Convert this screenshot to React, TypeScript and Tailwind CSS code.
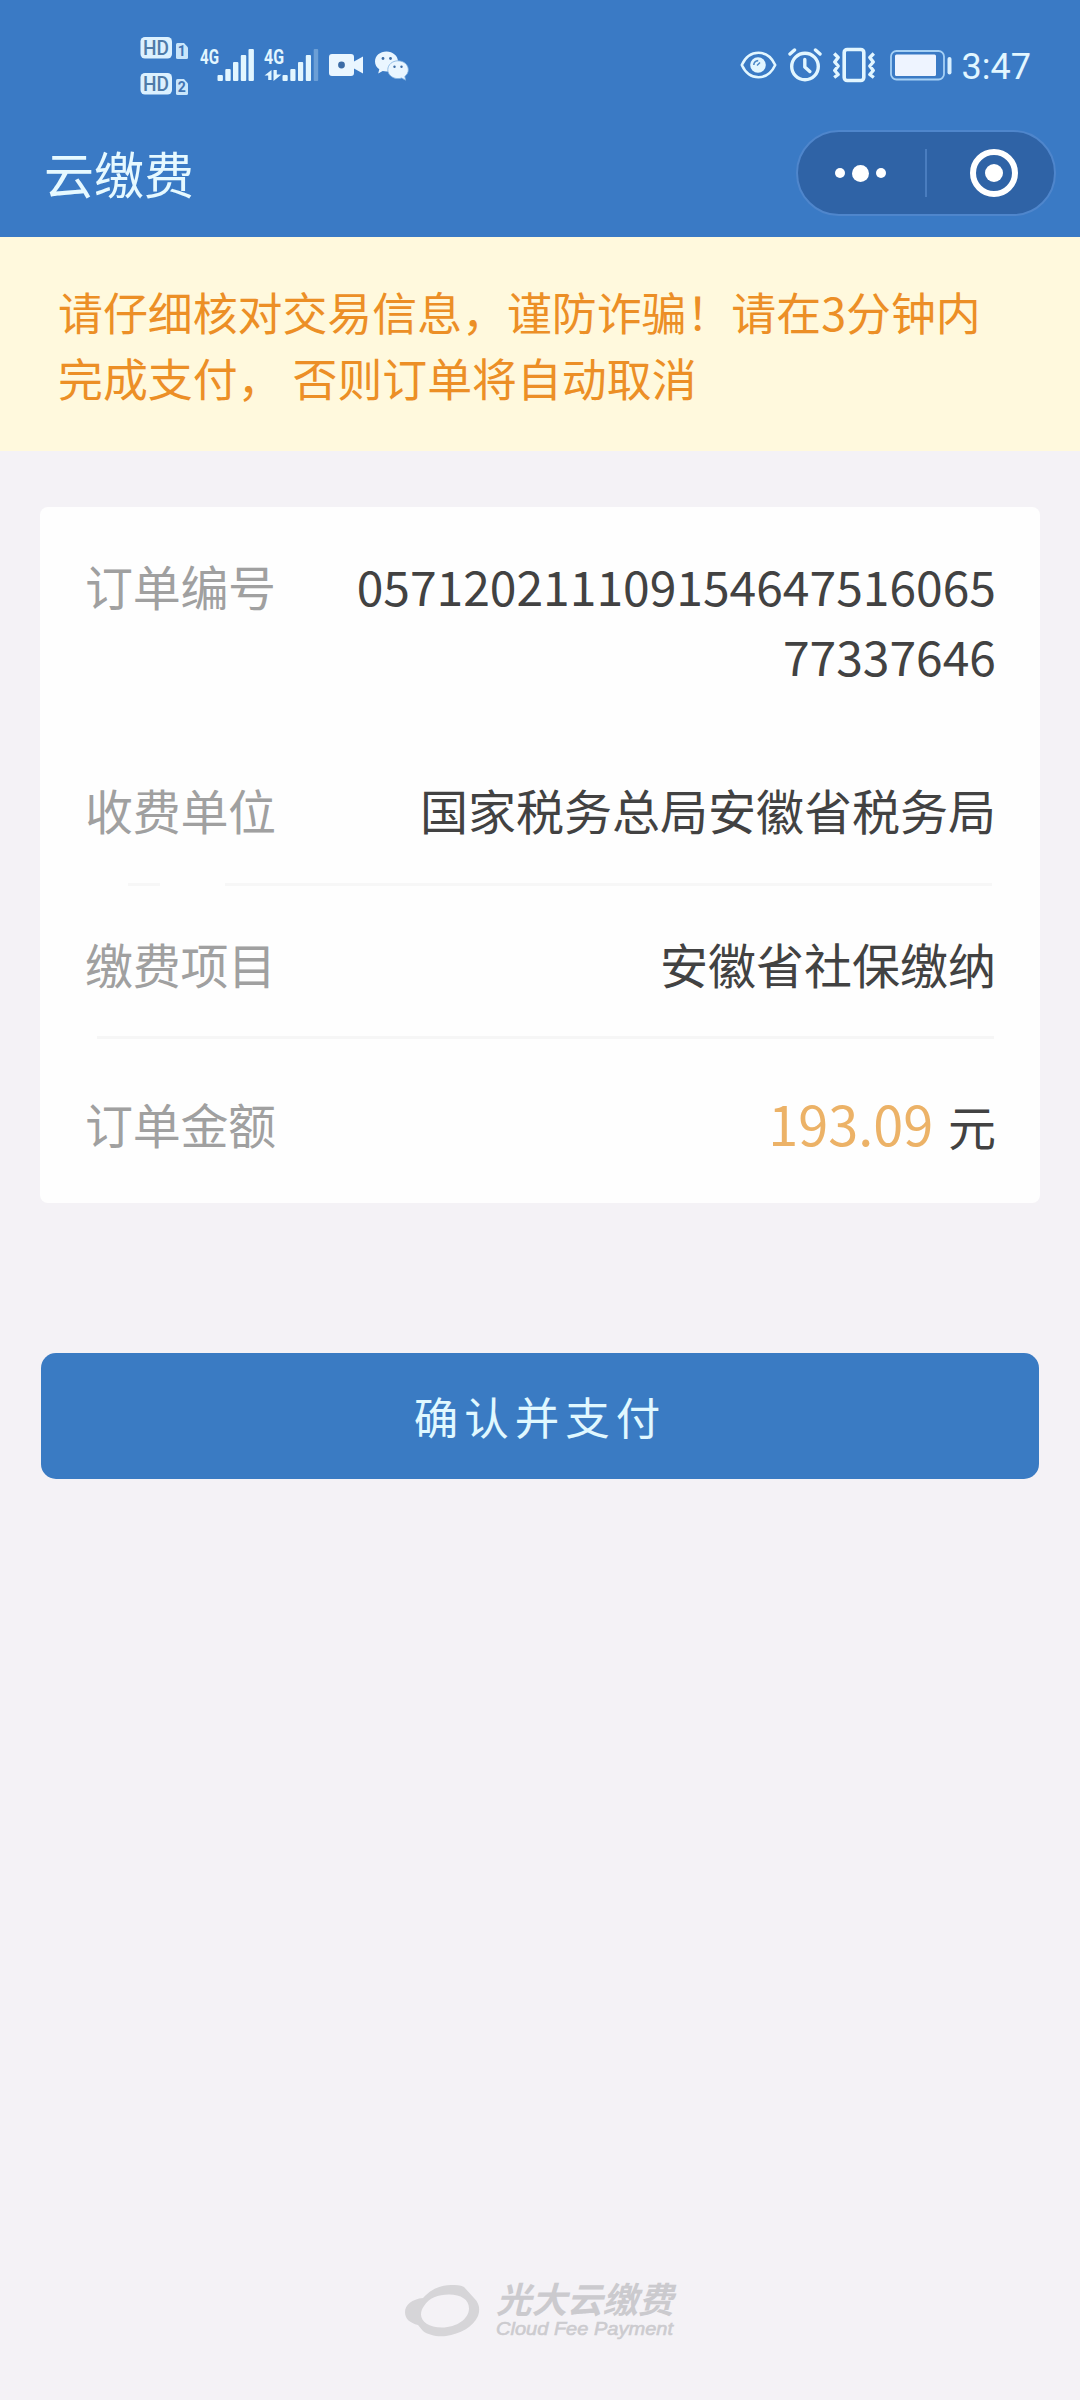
import type { ReactNode } from "react";

const ICE = "#e2f6ff";

function HdBadge({ sim }: { sim: string }) {
  return (
    <svg width="50" height="22" viewBox="0 0 50 22" className="overflow-visible">
      <rect x="0.500" y="0" width="31.500" height="21.500" rx="4.500" fill="#dcf1ff" />
      <text x="3" y="17.800" fontFamily="Roboto, sans-serif" fontSize="20" fontWeight="500" textLength="26" lengthAdjust="spacingAndGlyphs" fill="#4f7ba8">
        HD
      </text>
      <path d="M37.500 6H44l4 4.500v10a1.500 1.500 0 0 1-1.500 1.500H37.500a1.500 1.500 0 0 1-1.500-1.500v-13A1.500 1.500 0 0 1 37.500 6z" fill="#c9e6fb" />
      <text x="41.800" y="19" textAnchor="middle" fontFamily="Roboto, sans-serif" fontSize="14" fontWeight="700" fill="#3f74b4">
        {sim}
      </text>
    </svg>
  );
}

function SignalFull() {
  return (
    <svg width="56" height="34" viewBox="0 0 56 34" className="overflow-visible">
      <text x="0" y="15.500" fontFamily="Roboto, sans-serif" fontSize="21" fontWeight="700" textLength="19" lengthAdjust="spacingAndGlyphs" fill={ICE}>
        4G
      </text>
      <g fill={ICE}>
        <rect x="17.500" y="27" width="5.400" height="6" rx="1" />
        <rect x="25.300" y="21" width="5.400" height="12" rx="1" />
        <rect x="33" y="14" width="5.400" height="19" rx="1" />
        <rect x="40.800" y="7" width="5.400" height="26" rx="1" />
        <rect x="48.500" y="1" width="5.400" height="32" rx="1" />
      </g>
    </svg>
  );
}

function SignalData() {
  return (
    <svg width="56" height="34" viewBox="0 0 56 34" className="overflow-visible">
      <text x="0" y="15.500" fontFamily="Roboto, sans-serif" fontSize="21" fontWeight="700" textLength="20" lengthAdjust="spacingAndGlyphs" fill={ICE}>
        4G
      </text>
      <g fill={ICE}>
        <path d="M7.500 22v10H4.200V27.500H0.500z" />
        <path d="M9.500 22h3.300v4.500H17.500L9.500 33z" />
        <rect x="18.500" y="27" width="5.200" height="6" rx="1" />
        <rect x="26.300" y="21" width="5.200" height="12" rx="1" />
        <rect x="34" y="14" width="5.200" height="19" rx="1" />
        <rect x="41.800" y="7" width="5.200" height="26" rx="1" />
        <rect x="49.700" y="1" width="4.500" height="32" rx="1" opacity="0.3" />
      </g>
    </svg>
  );
}

function VideoIcon() {
  return (
    <svg width="36" height="24" viewBox="0 0 36 24">
      <path d="M3 1h19a3 3 0 0 1 3 3v4.500L34 3.500v17L25 15.500V20a3 3 0 0 1-3 3H3a3 3 0 0 1-3-3V4a3 3 0 0 1 3-3z" fill="#eaf6ff" />
      <circle cx="12.500" cy="12" r="3.400" fill="#3c6ca6" />
    </svg>
  );
}

function WechatIcon() {
  return (
    <svg width="34" height="30" viewBox="0 0 34 30">
      <path d="M11.500 0.500C5 0.500 0 4.800 0 10.500c0 3.200 1.600 6 4.300 7.800L3.200 22.500l4.500-2.400c1.200.3 2.500.5 3.800.5 6.300 0 11.500-4.500 11.500-10.100S17.800.5 11.500.5z" fill="#eaf6ff" />
      <circle cx="8" cy="7.500" r="1.400" fill="#3c6ca6" />
      <circle cx="15.500" cy="7.500" r="1.400" fill="#3c6ca6" />
      <path d="M23 9.800c5.800 0 10.300 3.900 10.300 8.900 0 2.700-1.300 5-3.500 6.700l.8 3.800-3.900-2.200c-1.200.4-2.400.6-3.700.6-5.700 0-10.200-4-10.200-8.900s4.500-8.900 10.200-8.900z" fill="#eaf6ff" stroke="#7fb0e0" strokeWidth="0.800" />
      <circle cx="19.500" cy="15.800" r="1.200" fill="#3c6ca6" />
      <circle cx="26.500" cy="15.800" r="1.200" fill="#3c6ca6" />
    </svg>
  );
}

function EyeIcon() {
  return (
    <svg width="37" height="30" viewBox="0 0 37 30" fill="none" stroke={ICE} strokeWidth="2.600">
      <path d="M1.800 15C5 8 11 2.800 18.500 2.800S32 8 35.200 15C32 22 26 27.200 18.500 27.200S5 22 1.800 15z" strokeLinejoin="round" />
      <circle cx="18" cy="15" r="7.800" fill={ICE} stroke="none" />
      <path d="M13.800 15a4.400 4.400 0 0 1 4.400-4.400" stroke="#4a86c6" strokeWidth="1.600" />
      <path d="M17 15.500l3-3" stroke="#4a86c6" strokeWidth="1.400" />
    </svg>
  );
}

function AlarmIcon() {
  return (
    <svg width="34" height="34" viewBox="0 0 34 34" fill="none" stroke={ICE} strokeWidth="3.400" strokeLinecap="round" strokeLinejoin="round">
      <circle cx="17" cy="18.500" r="13.300" />
      <path d="M16.800 11.500v7.500l5 4.500M2 6l4.500-4M32 6l-4.500-4" />
    </svg>
  );
}

function VibrateIcon() {
  return (
    <svg width="44" height="36" viewBox="0 0 44 36" fill="none" stroke={ICE} strokeLinejoin="round">
      <rect x="12.200" y="2.500" width="19.600" height="31" rx="3" strokeWidth="3.600" />
      <path d="M2.200 6.500l4 4-3.500 4.500 3.500 4-3.500 4.500 3.500 4-4 3M41.800 6.500l-4 4 3.500 4.500-3.500 4 3.500 4.500-3.500 4 4 3" strokeWidth="3.400" />
    </svg>
  );
}

function BatteryIcon() {
  return (
    <svg width="62" height="31" viewBox="0 0 62 31">
      <rect x="1" y="1" width="53" height="28.500" rx="5.500" fill="none" stroke="#a5d0f5" strokeWidth="1.800" />
      <rect x="5" y="4.500" width="41" height="21.500" rx="1.500" fill="#eef4ff" />
      <rect x="57.500" y="7" width="4" height="17.500" rx="2" fill="#d8efff" />
    </svg>
  );
}

function StatusBar() {
  return (
    <div className="flex h-[130px] items-start pl-[140px]">
      <div className="mt-[37px] flex flex-col gap-[14px]">
        <HdBadge sim="1" />
        <HdBadge sim="2" />
      </div>
      <div className="mt-[48px] ml-[10px]">
        <SignalFull />
      </div>
      <div className="mt-[48px] ml-[8px]">
        <SignalData />
      </div>
      <div className="mt-[53px] ml-[9px]">
        <VideoIcon />
      </div>
      <div className="mt-[51px] ml-[10px]">
        <WechatIcon />
      </div>
      <div className="mr-[49px] ml-auto flex h-[130px] items-center">
        <EyeIcon />
        <div className="ml-[11px]">
          <AlarmIcon />
        </div>
        <div className="ml-[10px]">
          <VibrateIcon />
        </div>
        <div className="ml-[14px]">
          <BatteryIcon />
        </div>
        <span className="mt-[3px] ml-[10px] font-[Roboto,sans-serif] text-[36px] leading-none text-[#e2f6ff]">3:47</span>
      </div>
    </div>
  );
}

function Capsule() {
  return (
    <div className="mr-[24px] flex h-[86px] w-[260px] items-center rounded-full border-2 border-[#4f86cc] bg-[#2f63a6]">
      <div className="flex w-[127px] items-center justify-center gap-[7px] pr-[2px]">
        <i className="size-[10px] rounded-full bg-white" />
        <i className="size-[17px] rounded-full bg-white" />
        <i className="size-[10px] rounded-full bg-white" />
      </div>
      <div className="h-[48px] w-[2px] bg-[#4a7dbf]" />
      <div className="flex flex-1 items-center justify-center pl-[6px]">
        <div className="flex size-[48px] items-center justify-center rounded-full border-[6px] border-white">
          <i className="size-[18px] rounded-full bg-white" />
        </div>
      </div>
    </div>
  );
}

function Row({ label, className, children }: { label: string; className: string; children: ReactNode }) {
  return (
    <div className={`flex items-start justify-between pr-[44px] pl-[45px] text-[48px] leading-[70px] ${className}`}>
      <span className="tracking-[-0.3px] text-[#a0a0a0]">{label}</span>
      <div className="text-right text-[#424242]">{children}</div>
    </div>
  );
}

function CloudLogo() {
  return (
    <svg width="76" height="54" viewBox="0 0 76 54">
      <path
        fillRule="evenodd"
        fill="#d6d5d8"
        d="M18 14C26 5 36 1 46 1c5 0 9 0 13 2l10 11c6 6 6 12 4 18-5 11-18 18-32 20-9 1-18-1-23-5l-5-6C5 39 0 35 0 28s7-13 18-14zM19 22c5-8 14-11.500 25-11.500 12 0 20 5 20 14 0 10-12 19-27 19-13 0-21-6-21-13 0-3 1-6 3-8.500z"
      />
    </svg>
  );
}

export default function App() {
  return (
    <div className="flex h-[2400px] w-[1080px] flex-col overflow-hidden bg-[#f4f2f6] font-['Noto_Sans_CJK_SC',sans-serif]">
      <header className="h-[237px] shrink-0 bg-[#3a7ac5]">
        <StatusBar />
        <div className="flex h-[86px] items-center justify-between pl-[44px]">
          <h1 className="pb-[3px] text-[50px] leading-none text-[#e6f9ff]">云缴费</h1>
          <Capsule />
        </div>
      </header>

      <div className="h-[214px] shrink-0 bg-[#fff9dd] pt-[42px] pl-[58px] text-[44.900px] leading-[65.500px] whitespace-nowrap text-[#ec8f26]">
        <p>请仔细核对交易信息，谨防诈骗！请在3分钟内</p>
        <p>完成支付， 否则订单将自动取消</p>
      </div>

      <section className="mx-[40px] mt-[56px] h-[696px] rounded-[8px] bg-[#fefefe]">
        <Row label="订单编号" className="h-[224px] pt-[43px]">
          <p>057120211109154647516065</p>
          <p>77337646</p>
        </Row>
        <Row label="收费单位" className="h-[152px] pt-[43px]">
          国家税务总局安徽省税务局
        </Row>
        <div className="mr-[48px] ml-[88px] flex h-[3px] gap-[65px]">
          <div className="w-[32px] bg-[#f7f7f7]" />
          <div className="flex-1 bg-[#f7f7f7]" />
        </div>
        <Row label="缴费项目" className="h-[150px] pt-[42px]">
          安徽省社保缴纳
        </Row>
        <div className="mr-[46px] ml-[57px] h-[3px] bg-[#f6f6f6]" />
        <Row label="订单金额" className="pt-[49px]">
          <span className="mr-[4px] text-[54px] text-[#ecb267]">193.09</span> 元
        </Row>
      </section>

      <button className="mx-[41px] mt-[150px] h-[126px] rounded-[15px] bg-[#3a7bc3] text-[44.500px] tracking-[6px] text-[#e0f8ff]">
        确认并支付
      </button>

      <footer className="mt-auto mb-[58px] flex items-center pl-[405px] text-[#cbcace]">
        <CloudLogo />
        <div className="mb-[1px] ml-[15px] flex flex-col italic">
          <span className="text-[35.500px] leading-[38px] font-bold">光大云缴费</span>
          <svg width="182" height="24" viewBox="0 0 182 24" className="overflow-visible">
            <text x="0" y="17.500" fontFamily="Liberation Sans, sans-serif" fontSize="19" fontStyle="italic" textLength="177" lengthAdjust="spacingAndGlyphs" fill="#cccbcf" stroke="#cccbcf" strokeWidth="0.600">
              Cloud Fee Payment
            </text>
          </svg>
        </div>
      </footer>
    </div>
  );
}
